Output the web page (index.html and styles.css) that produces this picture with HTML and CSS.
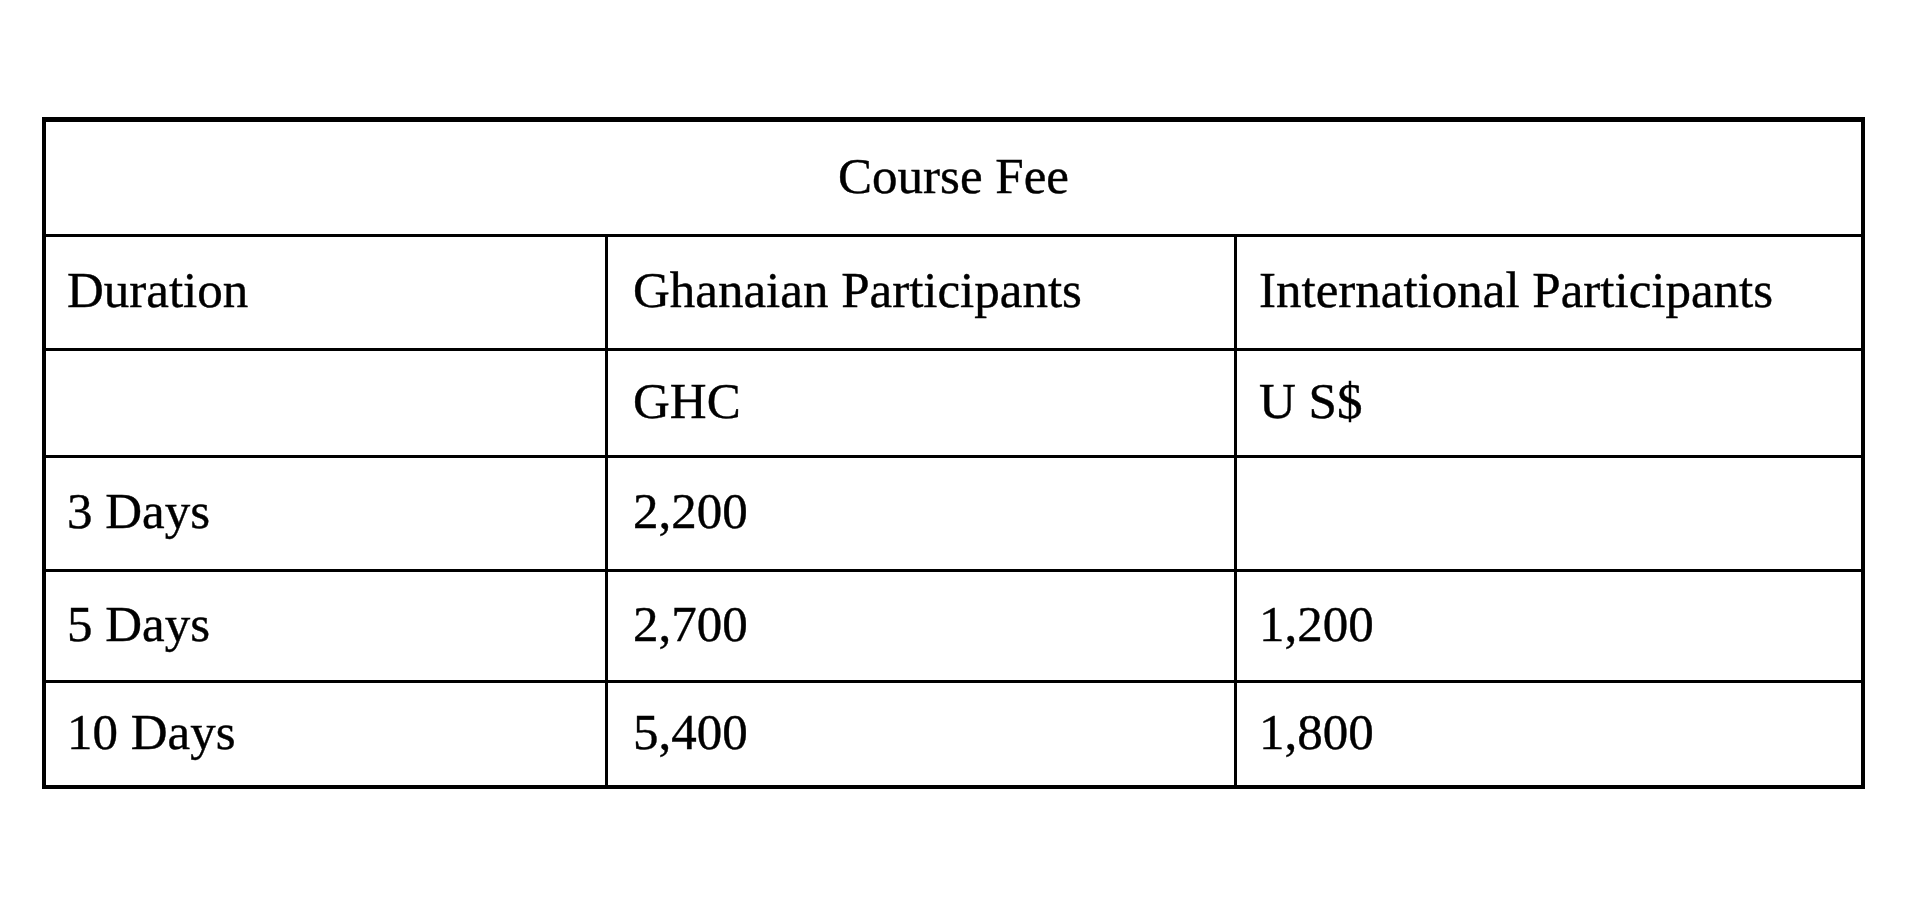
FILE: index.html
```html
<!DOCTYPE html>
<html lang="en">
<head>
<meta charset="utf-8">
<title>Course Fee</title>
<link rel="stylesheet" href="styles.css">
</head>
<body>
<main class="page">
  <table class="fees">
    <colgroup>
      <col class="col-a">
      <col class="col-b">
      <col class="col-c">
    </colgroup>
    <tr class="row r1">
      <td class="title last" colspan="3">Course Fee</td>
    </tr>
    <tr class="row r2">
      <td class="c1">Duration</td>
      <td class="c2">Ghanaian Participants</td>
      <td class="c3 last">International Participants</td>
    </tr>
    <tr class="row r3">
      <td class="c1"></td>
      <td class="c2">GHC</td>
      <td class="c3 last">U S$</td>
    </tr>
    <tr class="row r4">
      <td class="c1">3 Days</td>
      <td class="c2">2,200</td>
      <td class="c3 last"></td>
    </tr>
    <tr class="row r5">
      <td class="c1">5 Days</td>
      <td class="c2">2,700</td>
      <td class="c3 last">1,200</td>
    </tr>
    <tr class="row r6 end">
      <td class="c1">10 Days</td>
      <td class="c2">5,400</td>
      <td class="c3 last">1,800</td>
    </tr>
  </table>
</main>
</body>
</html>
```

FILE: styles.css
```css
html, body {
  margin: 0;
  padding: 0;
  background: #ffffff;
}

.page {
  padding: 117px 0 0 42px;
}

.fees {
  border-collapse: separate;
  border-spacing: 0;
  table-layout: fixed;
  width: 1823px;
  border-style: solid;
  border-color: #000;
  border-width: 5px 4px 4px 4px;
  font-family: "Liberation Serif", "Times New Roman", serif;
  font-size: 51px;
  color: #000;
  -webkit-text-stroke: 0.4px #000;
}

.col-a { width: 562px; }
.col-b { width: 629px; }
.col-c { width: 624px; }

.fees td {
  box-sizing: border-box;
  padding: 0 0 4px 0;
  border-right: 3px solid #000;
  border-bottom: 3px solid #000;
  vertical-align: middle;
  white-space: nowrap;
  line-height: 1.15;
}

.fees td.last { border-right: none; }
.fees tr.end td { border-bottom: none; }

.fees td.title {
  text-align: center;
  padding-left: 0;
}

.fees td.c1 { padding-left: 21px; }
.fees td.c2 { padding-left: 25px; }
.fees td.c3 { padding-left: 22px; }

.r1 { height: 115px; }
.r2 { height: 114px; }
.r3 { height: 107px; }
.r4 { height: 114px; }
.r5 { height: 111px; }
.r6 { height: 102px; }
```
